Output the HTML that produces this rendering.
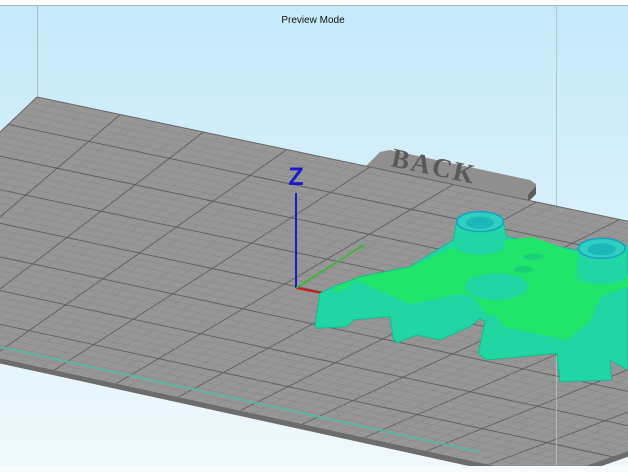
<!DOCTYPE html>
<html><head><meta charset="utf-8"><style>
html,body{margin:0;padding:0;width:628px;height:472px;overflow:hidden;font-family:"Liberation Sans",sans-serif}
</style></head><body>
<svg id="s" width="628" height="472" viewBox="0 0 628 472" xmlns="http://www.w3.org/2000/svg">
<defs>
<linearGradient id="bg" x1="0" y1="0" x2="0" y2="1">
<stop offset="0" stop-color="#c4e9f9"/><stop offset="1" stop-color="#f0f9fd"/>
</linearGradient>
</defs>
<rect width="628" height="472" fill="url(#bg)"/>
<rect x="0" y="0" width="628" height="5" fill="#fdfdfd"/>
<line x1="0" y1="5.5" x2="628" y2="5.5" stroke="#a9b6bd"/>
<line x1="37.5" y1="6" x2="37.5" y2="98" stroke="#a9bcc6"/>
<line x1="556.5" y1="6" x2="556.5" y2="466" stroke="#b3c6cf"/>
<text x="313" y="23" font-size="10" text-anchor="middle" fill="#111">Preview Mode</text>
<!-- BACK tab -->
<polygon points="365,167 380,152 390,150 530,180 536,184 536,194 528,202" fill="#8f8f8f"/>
<polygon points="528,195 536,186 536,194 528,202" fill="#5d5d5d"/>
<text x="390" y="166" font-size="27" font-weight="bold" fill="#5a5a5a" transform="rotate(12 390 166)" font-family="Liberation Serif,serif" letter-spacing="2">BACK</text>
<!-- bed thickness -->
<polygon points="-194,316 551,478 551,484 -194,321" fill="#6c6c6c"/>
<polygon points="551,478 1036,307 1036,312 551,484" fill="#6c6c6c"/>
<polygon id="bed" points="37,97 1036,307 551,478 -194,316" fill="#969696"/>
<g id="grid"></g>
<line x1="0" y1="347" x2="480" y2="452" stroke="#5fb3a3" stroke-width="2"/>
<rect x="0" y="466" width="628" height="6" fill="#f6fbfd"/>
<line x1="556.5" y1="300" x2="556.5" y2="466" stroke="#c4d4da" stroke-opacity="0.6"/>
<!-- axes -->
<line x1="296" y1="193" x2="296" y2="288" stroke="#1a1acc" stroke-width="2"/>
<text x="296" y="185" font-size="25" font-weight="bold" fill="#1a1acc" text-anchor="middle">Z</text>
<line x1="296" y1="288" x2="322" y2="293" stroke="#cc1a1a" stroke-width="2"/>
<line x1="296" y1="288" x2="362" y2="246" stroke="#2bbd2b" stroke-width="1.5"/>
<text x="360" y="250" font-size="8" fill="#2bbd2b">Y</text>
<g id="obj"></g>
</svg>
<script>
var NS="http://www.w3.org/2000/svg";
var A=[37,97],B=[1036,307],C=[551,478],D=[-194,316];
function P(u,v){var tx=A[0]+(B[0]-A[0])*u,ty=A[1]+(B[1]-A[1])*u,bx=D[0]+(C[0]-D[0])*u,by=D[1]+(C[1]-D[1])*u;return[tx+(bx-tx)*v,ty+(by-ty)*v];}
var g=document.getElementById('grid');
function L(p,q,c,w){var l=document.createElementNS(NS,'line');l.setAttribute('x1',p[0]);l.setAttribute('y1',p[1]);l.setAttribute('x2',q[0]);l.setAttribute('y2',q[1]);l.setAttribute('stroke',c);l.setAttribute('stroke-width',w);g.appendChild(l);}
var NU=60,NV=40;
for(var i=1;i<NU;i++){var u=i/NU;var m=i%5==0;L(P(u,0),P(u,1),m?'#5c5c5c':'#868686',m?0.9:0.5);}
for(var j=1;j<NV;j++){var v=j/NV;var m=j%5==0;L(P(0,v),P(1,v),m?'#5c5c5c':'#868686',m?0.9:0.5);}
L(A,B,'#666',1);L(A,D,'#666',1);
var o=document.getElementById('obj');
function T(z){return z.map(function(p){return (p[0]/3+300).toFixed(1)+','+(p[1]/3+140).toFixed(1)}).join(' ');}
function poly(pts,fill,st){var e=document.createElementNS(NS,'polygon');e.setAttribute('points',T(pts));e.setAttribute('fill',fill);if(st){e.setAttribute('stroke',st);e.setAttribute('stroke-width','1');}o.appendChild(e);}
function ell(cx,cy,rx,ry,fill,st){var e=document.createElementNS(NS,'ellipse');e.setAttribute('cx',cx/3+300);e.setAttribute('cy',cy/3+140);e.setAttribute('rx',rx/3);e.setAttribute('ry',ry/3);e.setAttribute('fill',fill);if(st){e.setAttribute('stroke',st);e.setAttribute('stroke-width','1.5');}o.appendChild(e);}
poly([[45,555],[60,460],[100,440],[180,410],[330,380],[460,300],[470,240],[500,225],[590,225],[610,250],[620,290],[830,330],[840,310],[900,300],[960,305],[984,320],[984,690],[930,660],[935,720],[780,725],[770,640],[560,660],[535,640],[555,545],[540,535],[510,560],[420,600],[350,585],[290,610],[280,595],[270,530],[160,540],[140,560],[50,565]],'#22d6a4','#17b890');
poly([[100,445],[180,412],[330,382],[455,325],[610,300],[700,292],[830,338],[860,400],[984,405],[984,440],[900,470],[870,545],[800,600],[610,560],[590,528],[560,525],[520,470],[480,462],[330,492],[170,422],[110,460]],'#1fe56a');
ell(700,350,30,10,'#19cf78');ell(670,388,28,10,'#19cf78');
ell(590,440,95,40,'#22d6a4');
poly([[470,245],[610,245],[615,320],[465,320]],'#22d6a4');
ell(540,322,75,22,'#22d6a4');
ell(540,245,70,30,'#2ccfc0','#1a9fc0');ell(540,248,42,18,'#1cb7b6');
poly([[835,330],[975,330],[980,410],[830,410]],'#22d6a4');
ell(905,410,75,22,'#22d6a4');
ell(905,325,70,30,'#2ccfc0','#1a9fc0');ell(905,328,42,18,'#1cb7b6');
</script>
</body></html>
